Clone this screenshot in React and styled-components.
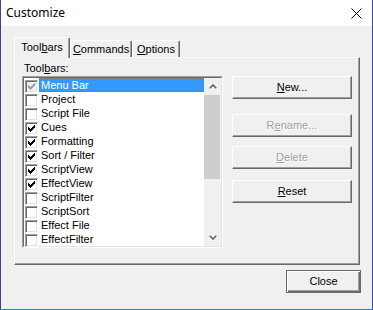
import React from 'react';
import styled, { createGlobalStyle } from 'styled-components';

const GlobalStyle = createGlobalStyle`
    html, body {
        margin: 0;
        padding: 0;
        background: #f0f0f0;
    }
    body {
        font-family: "Liberation Sans", Arial, sans-serif;
        font-size: 11px;
        color: #000000;
    }
`;

const Window = styled.div`
    box-sizing: border-box;
    width: 373px;
    height: 310px;
    display: flex;
    flex-direction: column;
    border-left: 1px solid #4c3d91;
    border-right: 1px solid #3b4ba3;
    border-bottom: 1px solid #2a79d4;
    background: #f0f0f0;
`;

const TitleBar = styled.div`
    height: 26px;
    flex: none;
    display: flex;
    align-items: center;
    justify-content: space-between;
    padding: 0 10px 0 5px;
    background: #ffffff;
`;

const Title = styled.div`
    font-family: "Noto Sans", "Open Sans", sans-serif;
    font-size: 12px;
    font-weight: 400;
    line-height: 26px;
    color: #000000;
`;

const Body = styled.div`
    flex: 1;
    display: flex;
    flex-direction: column;
    padding: 11px 12px 0 13px;
`;

const TabStrip = styled.div`
    display: flex;
    align-items: flex-end;
    height: 20px;
`;

const Tab = styled.div`
    position: relative;
    box-sizing: border-box;
    width: ${p => p.$w}px;
    height: ${p => (p.$active ? 21 : 17)}px;
    margin-bottom: ${p => (p.$active ? -1 : 0)}px;
    z-index: ${p => (p.$active ? 1 : 0)};
    padding-top: ${p => (p.$active ? 3 : 2)}px;
    text-align: center;
    line-height: 13px;
    background: #f0f0f0;
    border-top: 1px solid #ffffff;
    border-left: 1px solid #ffffff;
    border-right: 1px solid #696969;
    border-radius: 2px 2px 0 0;
    box-shadow: inset -1px 0 0 #a0a0a0;
`;

const Panel = styled.div`
    box-sizing: border-box;
    width: 346px;
    height: 208px;
    padding: 4px 0 0 7px;
    border-top: 1px solid #ffffff;
    border-left: 1px solid #ffffff;
    border-right: 1px solid #696969;
    border-bottom: 1px solid #696969;
    box-shadow: inset -1px -1px 0 #a0a0a0;
`;

const FieldLabel = styled.div`
    margin: 0 0 1px 2px;
    height: 13px;
    line-height: 13px;
`;

const PanelRow = styled.div`
    display: flex;
    align-items: flex-start;
`;

const ListFrame = styled.div`
    box-sizing: border-box;
    width: 201px;
    height: 172px;
    border-top: 1px solid #a0a0a0;
    border-left: 1px solid #a0a0a0;
    border-right: 1px solid #ffffff;
    border-bottom: 1px solid #ffffff;
`;

const ListInner = styled.div`
    box-sizing: border-box;
    height: 100%;
    display: flex;
    background: #ffffff;
    border-top: 1px solid #696969;
    border-left: 1px solid #696969;
    border-right: 1px solid #e3e3e3;
    border-bottom: 1px solid #e3e3e3;
`;

const ItemColumn = styled.div`
    flex: 1;
    display: flex;
    flex-direction: column;
`;

const Item = styled.div`
    display: flex;
    height: 14px;
    flex: none;
`;

const CheckBox = styled.div`
    box-sizing: border-box;
    flex: none;
    width: 13px;
    height: 13px;
    margin: 2px 0 0 1px;
    padding: 2px;
    background: ${p => (p.$disabled ? '#f0f0f0' : '#ffffff')};
    border-top: 1px solid #a0a0a0;
    border-left: 1px solid #a0a0a0;
    border-right: 1px solid #ffffff;
    border-bottom: 1px solid #ffffff;
    box-shadow: inset 1px 1px 0 #696969, inset -1px -1px 0 #e3e3e3;

    svg {
        display: block;
    }
`;

const ItemText = styled.div`
    box-sizing: border-box;
    flex: 1;
    height: 14px;
    margin-left: 1px;
    padding-left: 1px;
    line-height: 12px;
    white-space: nowrap;
    border: 1px dotted ${p => (p.$selected ? '#cc6600' : 'transparent')};
    background: ${p => (p.$selected ? '#3399ff' : 'transparent')};
    color: ${p => (p.$selected ? '#ffffff' : '#000000')};
`;

const ScrollBar = styled.div`
    width: 17px;
    flex: none;
    display: flex;
    flex-direction: column;
    background: #f0f0f0;
`;

const ScrollArrow = styled.div`
    height: 17px;
    flex: none;
    display: flex;
    align-items: center;
    justify-content: center;
`;

const Thumb = styled.div`
    height: 84px;
    flex: none;
    margin-right: 1px;
    background: #cdcdcd;
`;

const Track = styled.div`
    flex: 1;
`;

const ButtonColumn = styled.div`
    width: 120px;
    margin-left: 9px;
    display: flex;
    flex-direction: column;
`;

const Button = styled.div`
    box-sizing: border-box;
    width: ${p => p.$w || '100%'};
    height: 23px;
    margin-top: ${p => p.$top || 0}px;
    display: flex;
    align-items: center;
    justify-content: center;
    line-height: 13px;
    background: #f0f0f0;
    color: ${p => (p.$disabled ? '#a0a0a0' : '#000000')};
    text-shadow: ${p => (p.$disabled ? '1px 1px 0 #ffffff' : 'none')};
    border-top: 1px solid ${p => (p.$default ? '#646464' : '#ffffff')};
    border-left: 1px solid ${p => (p.$default ? '#646464' : '#ffffff')};
    border-right: 1px solid #696969;
    border-bottom: 1px solid #696969;
    box-shadow: ${p =>
        p.$default
            ? 'inset 1px 1px 0 #ffffff, inset -1px -1px 0 #696969, inset -2px -2px 0 #a0a0a0'
            : 'inset -1px -1px 0 #a0a0a0'};
`;

const Footer = styled.div`
    display: flex;
    justify-content: flex-end;
    margin: 5px -1px 0 0;
`;

const Mn = styled.span`
    text-decoration: underline;
    text-underline-offset: 1px;
`;

const Check = ({ color }) => {
    // classic 7x7 tick, one 1x3 column per pixel column
    const starts = [2, 3, 4, 3, 2, 1, 0];
    const d = starts.map((r, c) => `M${c} ${r}h1v3h-1z`).join('');
    return (
        <svg width="7" height="7" viewBox="0 0 7 7" shapeRendering="crispEdges">
            <path d={d} fill={color} />
        </svg>
    );
};

const Chevron = ({ down }) => (
    <svg width="8" height="5" viewBox="0 0 8 5">
        <path
            d={down ? 'M0.8 0.8 L4 4 L7.2 0.8' : 'M0.8 4.2 L4 1 L7.2 4.2'}
            fill="none"
            stroke="#606060"
            strokeWidth="1.6"
        />
    </svg>
);

const CloseGlyph = () => (
    <svg width="11" height="11" viewBox="0 0 11 11">
        <path d="M0.5 0.5 L10.5 10.5 M10.5 0.5 L0.5 10.5" stroke="#000000" strokeWidth="1" />
    </svg>
);

const toolbars = [
    { label: 'Menu Bar', checked: true, disabled: true, selected: true },
    { label: 'Project' },
    { label: 'Script File' },
    { label: 'Cues', checked: true },
    { label: 'Formatting', checked: true },
    { label: 'Sort / Filter', checked: true },
    { label: 'ScriptView', checked: true },
    { label: 'EffectView', checked: true },
    { label: 'ScriptFilter' },
    { label: 'ScriptSort' },
    { label: 'Effect File' },
    { label: 'EffectFilter' },
];

export default function App() {
    return (
        <>
            <GlobalStyle />
            <Window>
                <TitleBar>
                    <Title>Customize</Title>
                    <CloseGlyph />
                </TitleBar>
                <Body>
                    <TabStrip>
                        <Tab $active $w={56}>Tool<Mn>b</Mn>ars</Tab>
                        <Tab $w={62}><Mn>C</Mn>ommands</Tab>
                        <Tab $w={48}><Mn>O</Mn>ptions</Tab>
                    </TabStrip>
                    <Panel>
                        <FieldLabel>Tool<Mn>b</Mn>ars:</FieldLabel>
                        <PanelRow>
                            <ListFrame>
                                <ListInner>
                                    <ItemColumn>
                                        {toolbars.map(t => (
                                            <Item key={t.label}>
                                                <CheckBox $disabled={t.disabled}>
                                                    {t.checked && <Check color={t.disabled ? '#a0a0a0' : '#000000'} />}
                                                </CheckBox>
                                                <ItemText $selected={t.selected}>{t.label}</ItemText>
                                            </Item>
                                        ))}
                                    </ItemColumn>
                                    <ScrollBar>
                                        <ScrollArrow><Chevron /></ScrollArrow>
                                        <Thumb />
                                        <Track />
                                        <ScrollArrow><Chevron down /></ScrollArrow>
                                    </ScrollBar>
                                </ListInner>
                            </ListFrame>
                            <ButtonColumn>
                                <Button><Mn>N</Mn>ew...</Button>
                                <Button $top={15} $disabled>R<Mn>e</Mn>name...</Button>
                                <Button $top={9} $disabled><Mn>D</Mn>elete</Button>
                                <Button $top={11}><Mn>R</Mn>eset</Button>
                            </ButtonColumn>
                        </PanelRow>
                    </Panel>
                    <Footer>
                        <Button $default $w="75px">Close</Button>
                    </Footer>
                </Body>
            </Window>
        </>
    );
}
